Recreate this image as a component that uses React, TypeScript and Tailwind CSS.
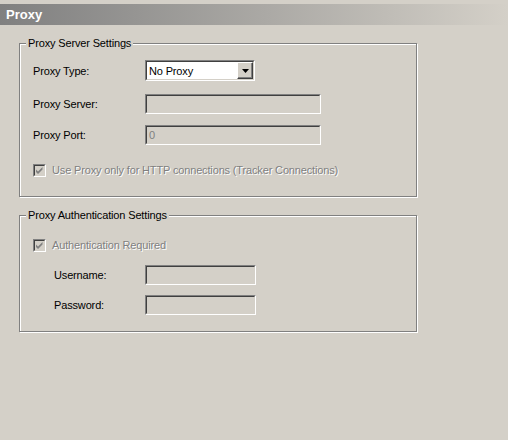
const font = "font-['Tahoma','Liberation_Sans',Arial,sans-serif]";

function Sunken({ className = "", children }: { className?: string; children?: React.ReactNode }) {
  return (
    <div className={`border border-t-[#808080] border-l-[#808080] border-r-white border-b-white ${className}`}>
      <div className="h-full w-full border border-t-[#404040] border-l-[#404040] border-r-[#d4d0c8] border-b-[#d4d0c8]">
        {children}
      </div>
    </div>
  );
}

function DisabledCheck({ label }: { label: string }) {
  return (
    <div className="flex items-center gap-[6px]">
      <Sunken className="h-[13px] w-[13px]">
        <svg viewBox="0 0 11 11" className="h-[11px] w-[11px] -m-px block" aria-hidden>
          <path d="M2 4.5 L4 6.5 L8.5 2 V4.5 L4 9 L2 7 Z" fill="#808080" />
        </svg>
      </Sunken>
      <span className="text-[#808080] [text-shadow:1px_1px_0_#fff]">{label}</span>
    </div>
  );
}

function Group({ title, className = "", children }: { title: string; className?: string; children: React.ReactNode }) {
  return (
    <div className={`relative mx-[19px] w-[398px] border border-[#808080] shadow-[inset_1px_1px_0_#fff,1px_1px_0_#fff] ${className}`}>
      <span className="absolute -top-[6px] left-[6px] bg-[#d4d0c8] px-[2px] text-black">{title}</span>
      {children}
    </div>
  );
}

function Row({ label, indent = "pl-[13px]", children }: { label: string; indent?: string; children: React.ReactNode }) {
  return (
    <div className={`flex items-center ${indent}`}>
      <span className="w-[112px] shrink-0 pt-px text-black">{label}</span>
      {children}
    </div>
  );
}

export default function App() {
  return (
    <div className={`h-[440px] w-[508px] bg-[#d4d0c8] pt-[4px] text-[11px] leading-none tracking-[-0.15px] ${font}`}>
      <div className="flex h-[21px] items-center bg-gradient-to-r from-[#808080] to-[#d4d0c8] pl-[6px] text-[13px] font-bold tracking-normal text-white">
        Proxy
      </div>

      <Group title="Proxy Server Settings" className="mt-[18px] h-[154px] pt-[16px]">
        <Row label="Proxy Type:">
          <Sunken className="h-[21px] w-[110px] bg-white">
            <div className="flex h-full items-center bg-white">
              <span className="flex-1 pl-[2px] pt-px text-black">No Proxy</span>
              <div className="flex h-full w-[16px] items-center justify-center border border-t-white border-l-white border-r-[#404040] border-b-[#404040] bg-[#d4d0c8] shadow-[inset_-1px_-1px_0_#808080]">
                <svg viewBox="0 0 7 4" className="h-[4px] w-[7px]" aria-hidden>
                  <path d="M0 0 H7 L3.5 4 Z" fill="#000" />
                </svg>
              </div>
            </div>
          </Sunken>
        </Row>
        <div className="mt-[13px]">
          <Row label="Proxy Server:">
            <Sunken className="h-[20px] w-[176px]" />
          </Row>
        </div>
        <div className="mt-[11px]">
          <Row label="Proxy Port:">
            <Sunken className="h-[20px] w-[176px]">
              <div className="flex h-full items-center pl-[2px] pt-px text-[#808080]">0</div>
            </Sunken>
          </Row>
        </div>
        <div className="mt-[19px] pl-[13px]">
          <DisabledCheck label="Use Proxy only for HTTP connections (Tracker Connections)" />
        </div>
      </Group>

      <Group title="Proxy Authentication Settings" className="mt-[18px] h-[117px] pt-[23px]">
        <div className="pl-[13px]">
          <DisabledCheck label="Authentication Required" />
        </div>
        <div className="mt-[13px]">
          <Row label="Username:" indent="pl-[34px]">
            <div className="-ml-[21px]">
              <Sunken className="h-[20px] w-[111px]" />
            </div>
          </Row>
        </div>
        <div className="mt-[10px]">
          <Row label="Password:" indent="pl-[34px]">
            <div className="-ml-[21px]">
              <Sunken className="h-[20px] w-[111px]" />
            </div>
          </Row>
        </div>
      </Group>
    </div>
  );
}
